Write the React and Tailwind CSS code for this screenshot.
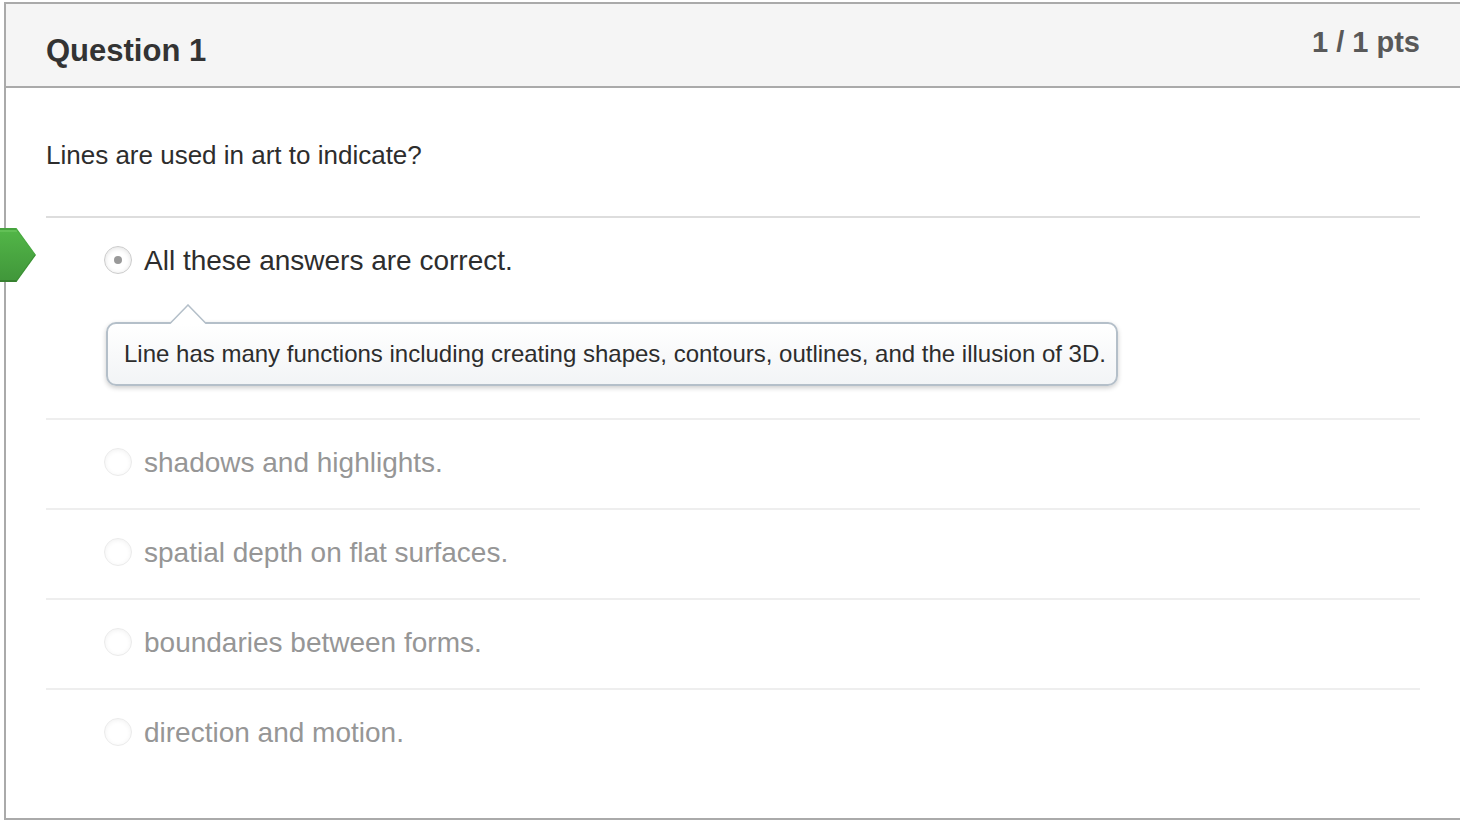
import React from "react";

const answers = [
  {
    id: "all",
    text: "All these answers are correct.",
    selected: true,
    comment:
      "Line has many functions including creating shapes, contours, outlines, and the illusion of 3D.",
  },
  { id: "shadows", text: "shadows and highlights." },
  { id: "depth", text: "spatial depth on flat surfaces." },
  { id: "boundaries", text: "boundaries between forms." },
  { id: "motion", text: "direction and motion." },
];

function CorrectMarker() {
  return (
    <svg
      className="absolute -left-[46px] top-2.5"
      width="36"
      height="54"
      viewBox="0 0 36 54"
      role="img"
      aria-label="Correct answer"
    >
      <defs>
        <linearGradient id="marker" x1="0" y1="0" x2="0" y2="1">
          <stop offset="0" stopColor="#53b748" />
          <stop offset="1" stopColor="#40963a" />
        </linearGradient>
      </defs>
      <path d="M0 0H16.5L36 27L16.5 54H0Z" fill="url(#marker)" />
      <path d="M0 1H16.2" stroke="#46a33e" strokeWidth="2" />
      <path d="M0 3H17" stroke="#62c056" strokeWidth="2" />
      <path d="M16.2 1L35 27" fill="none" stroke="#4aa842" strokeWidth="1" />
      <path d="M16.2 53L35 27" fill="none" stroke="#3d8f36" strokeWidth="1" />
      <path d="M0 53H16.5" fill="none" stroke="#37802f" strokeWidth="2" />
    </svg>
  );
}

function Comment({ children }) {
  return (
    <div className="relative mt-11 ml-0.5 w-fit rounded-[10px] border-2 border-[#b4bfc9] bg-linear-to-b from-white to-[#f2f4f6] py-3 pr-2.5 pl-4 text-[24px] leading-9 text-[#2d2d2d] shadow-[0_2px_5px_rgba(0,0,0,0.2)]">
      <svg
        className="absolute -top-5 left-[60px]"
        width="40"
        height="20"
        viewBox="0 0 40 20"
        aria-hidden="true"
      >
        <path d="M2 20L20 1L38 20Z" fill="#fff" />
        <path d="M2 19.5L20 1L38 19.5" fill="none" stroke="#b4bfc9" strokeWidth="1.5" />
      </svg>
      {children}
    </div>
  );
}

function Answer({ answer }) {
  const { id, text, selected, comment } = answer;
  return (
    <li
      className={
        selected
          ? "relative border-t-2 border-[#dddddd] pt-6 pb-8 pl-[58px] text-[#2d2d2d]"
          : "relative border-t-2 border-[#eeeeee] pt-6 pb-7 pl-[58px] text-[#969696]"
      }
    >
      {selected && <CorrectMarker />}
      <div className="flex items-center gap-3">
        <input
          type="radio"
          id={id}
          name="question-1"
          defaultChecked={selected}
          disabled
          className="grid size-7 shrink-0 appearance-none place-items-center rounded-full border border-[#ebebeb] bg-white shadow-[inset_0_1px_5px_rgba(0,0,0,0.06)] checked:border-[#cccccc] checked:shadow-[inset_0_1px_5px_rgba(0,0,0,0.12)] checked:before:size-2 checked:before:rounded-full checked:before:bg-[#999999] checked:before:content-['']"
        />
        <label htmlFor={id} className="pt-0.5 text-[28px] leading-[34px]">
          {text}
        </label>
      </div>
      {comment && <Comment>{comment}</Comment>}
    </li>
  );
}

export default function App() {
  return (
    <main className="bg-white pt-0.5 pl-1 font-['Liberation_Sans',Arial,sans-serif] text-[#2d2d2d]">
      <section className="border-y-2 border-l-2 border-[#aaaaaa]">
        <header className="flex items-start justify-between border-b-2 border-[#aaaaaa] bg-[#f5f5f5] px-10 pt-5 pb-5">
          <h1 className="pt-3 text-[31px] leading-[30px] font-bold text-[#333333]">Question 1</h1>
          <p className="text-[29px] leading-9 font-bold text-[#595959]">1 / 1 pts</p>
        </header>
        <div className="px-10 pt-12 pb-10">
          <p className="pt-0.5 text-[26px] leading-[34px]">Lines are used in art to indicate?</p>
          <ul className="mt-11">
            {answers.map((answer) => (
              <Answer key={answer.id} answer={answer} />
            ))}
          </ul>
        </div>
      </section>
    </main>
  );
}
